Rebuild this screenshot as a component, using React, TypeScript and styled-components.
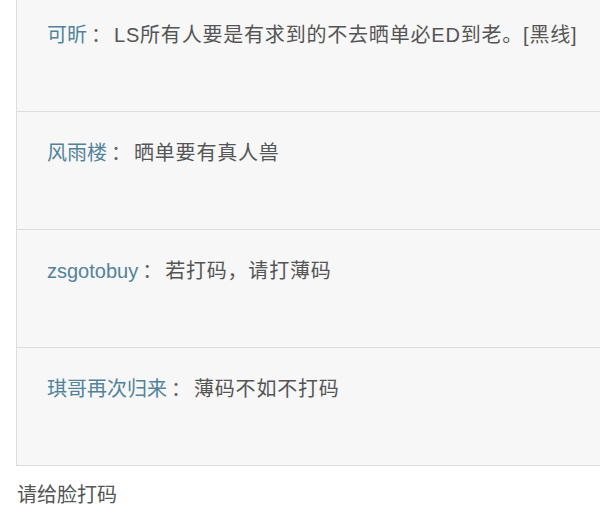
import React from "react";
import styled, { createGlobalStyle } from "styled-components";

const comments = [
  { name: "可昕", text: "LS所有人要是有求到的不去晒单必ED到老。[黑线]" },
  { name: "风雨楼", text: "晒单要有真人兽" },
  { name: "zsgotobuy", text: "若打码，请打薄码" },
  { name: "琪哥再次归来", text: "薄码不如不打码" },
];

const App = () => {
  return (
    <Page>
      <GlobalStyle />
      <Replies>
        {comments.map((c) => (
          <Reply key={c.name}>
            <Author>{c.name}</Author>
            <Colon>：</Colon>
            <Body>{c.text}</Body>
          </Reply>
        ))}
      </Replies>
      <Title>请给脸打码</Title>
    </Page>
  );
};

export default App;

const GlobalStyle = createGlobalStyle`
  body {
    margin: 0;
    background: #fff;
    overflow: hidden;
    font-family: "Liberation Sans", "Noto Sans CJK SC", sans-serif;
  }
`;

const Page = styled.div`
  padding-left: 16px;
`;

const Replies = styled.div`
  margin-top: -7px;
  background-color: #f7f7f7;
  border: 1px solid #dddddd;
  border-right: none;
  border-bottom: none;
`;

const Reply = styled.div`
  display: flex;
  align-items: baseline;
  height: 118px;
  box-sizing: border-box;
  padding: 27px 0 0 30px;
  border-bottom: 1px solid #dddddd;
  font-size: 20px;
  line-height: 28px;
  color: #555;
`;

const Author = styled.span`
  color: #52839b;
`;

const Colon = styled.span`
  width: 27px;
  box-sizing: border-box;
  padding-left: 4px;
  color: #666;
`;

const Body = styled.span`
  color: #555;
  letter-spacing: 0.8px;
`;

const Title = styled.div`
  margin-top: 15px;
  font-size: 20px;
  line-height: 28px;
  color: #555;
  padding-left: 1px;
`;
